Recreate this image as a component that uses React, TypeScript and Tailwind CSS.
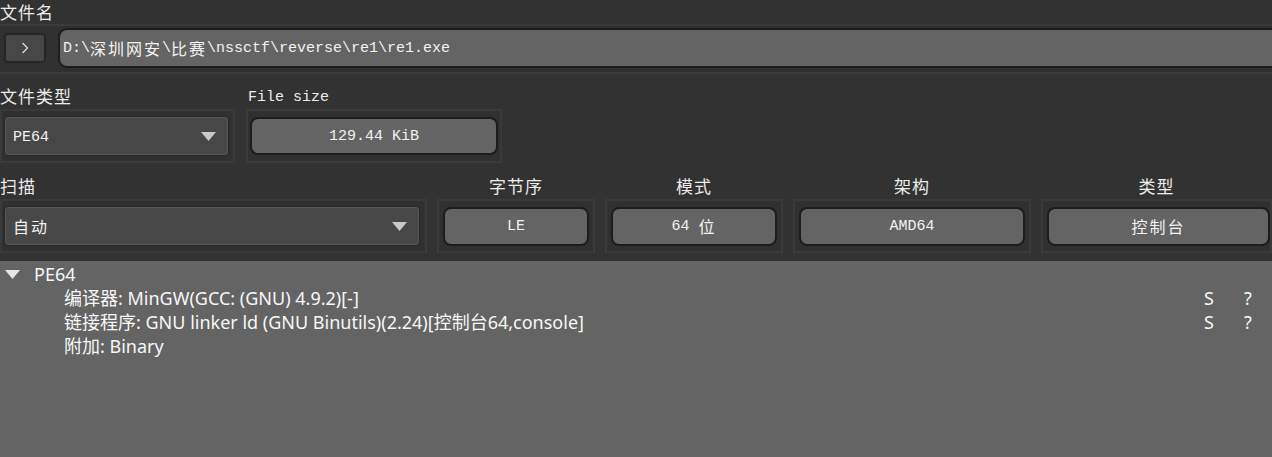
import React from "react";

const CJK = /([\u3000-\u9fff\uff00-\uffef]+)/;

function Mixed({
  text,
  mono = "text-[15px]",
  cjk = "text-[16px] tracking-[2px]",
}: {
  text: string;
  mono?: string;
  cjk?: string;
}) {
  const parts = text.split(CJK);
  return (
    <>
      {parts.map((p, i) =>
        p ? (
          CJK.test(p) ? (
            <span key={i} className={`font-['Noto_Sans_CJK_SC',sans-serif] ${cjk}`}>
              {p}
            </span>
          ) : (
            <span key={i} className={`font-['Liberation_Mono',monospace] whitespace-pre ${mono}`}>
              {p}
            </span>
          )
        ) : null
      )}
    </>
  );
}

function Arrow() {
  return (
    <svg width="15" height="9" viewBox="0 0 15 9" className="shrink-0">
      <polygon points="0,0 15,0 7.5,9" fill="#c9c9c9" />
    </svg>
  );
}

function Combo({ text }: { text: string }) {
  return (
    <div className="flex-1 h-[40px] rounded-[4px] border border-[#262626] bg-[#474747] shadow-[inset_0_0_0_1px_#585858] flex items-center pl-[8px] pr-[12px] text-[#f2f2f2]">
      <div className="flex-1 leading-none">
        <Mixed text={text} />
      </div>
      <Arrow />
    </div>
  );
}

function Field({ text, h = "h-[39px]" }: { text: string; h?: string }) {
  return (
    <div className={`flex-1 ${h} rounded-[8px] border-2 border-[#1c1c1c] bg-[#646464] flex items-center justify-center text-[#f2f2f2] leading-none`}>
      <Mixed text={text} />
    </div>
  );
}

function Group({ children, className = "" }: { children: React.ReactNode; className?: string }) {
  return (
    <div className={`h-[54px] border-2 border-[#3a3a3a] bg-[#303030] flex items-center ${className}`}>
      {children}
    </div>
  );
}

function Label({ text, center = false, h = "h-[35px]", pt = "pt-[10px]" }: { text: string; center?: boolean; h?: string; pt?: string }) {
  return (
    <div className={`${h} ${pt} leading-[24px] text-[#ececec] ${center ? "text-center" : ""}`}>
      <Mixed text={text} cjk="text-[17px] tracking-[1px]" />
    </div>
  );
}

export default function App() {
  return (
    <div className="w-[1272px] h-[457px] bg-[#323232] overflow-hidden flex flex-col">
      {/* 文件名 */}
      <div className="h-[24px] pt-[2px] leading-[20px] text-[#ececec]">
        <Mixed text="文件名" cjk="text-[17px] tracking-[1px]" />
      </div>
      <div className="h-[50px] w-[1300px] border-y-2 border-[#3a3a3a] bg-[#303030] flex items-start pt-[2px] pl-[4px] gap-[12px]">
        <div className="mt-[5px] w-[42px] h-[30px] rounded-[4px] border-2 border-[#262626] bg-[#474747] flex items-center justify-center">
          <svg width="8" height="12" viewBox="0 0 8 12">
            <polyline points="1.5,1 6.5,6 1.5,11" fill="none" stroke="#cfe3ff" strokeWidth="1.2" />
          </svg>
        </div>
        <div className="flex-1 h-[40px] rounded-l-[9px] border-2 border-[#1c1c1c] bg-[#646464] flex items-center pl-[3px] text-[#f2f2f2] leading-none">
          <Mixed text="D:\深圳网安\比赛\nssctf\reverse\re1\re1.exe" />
        </div>
      </div>

      {/* row 2 */}
      <div className="flex gap-[11px]">
        <div className="w-[235px] flex flex-col">
          <Label text="文件类型" />
          <Group className="pl-[2px] pr-[4px]">
            <Combo text="PE64" />
          </Group>
        </div>
        <div className="w-[256px] flex flex-col">
          <div className="pl-[2px]">
            <Label text="File size" pt="pt-[9px]" />
          </div>
          <Group className="pl-[2px] pr-[2px]">
            <Field text="129.44 KiB" h="h-[38px]" />
          </Group>
        </div>
      </div>

      {/* row 3 */}
      <div className="flex gap-[10px]">
        <div className="w-[427px] flex flex-col">
          <Label text="扫描" h="h-[36px]" pt="pt-[11px]" />
          <Group className="pl-[2px] pr-[5px]">
            <Combo text="自动" />
          </Group>
        </div>
        <div className="w-[158px] flex flex-col">
          <Label text="字节序" center h="h-[36px]" pt="pt-[11px]" />
          <Group className="px-[4px]">
            <Field text="LE" />
          </Group>
        </div>
        <div className="w-[178px] flex flex-col">
          <Label text="模式" center h="h-[36px]" pt="pt-[11px]" />
          <Group className="px-[4px]">
            <Field text="64 位" />
          </Group>
        </div>
        <div className="w-[238px] flex flex-col">
          <Label text="架构" center h="h-[36px]" pt="pt-[11px]" />
          <Group className="px-[4px]">
            <Field text="AMD64" />
          </Group>
        </div>
        <div className="w-[231px] flex flex-col">
          <Label text="类型" center h="h-[36px]" pt="pt-[11px]" />
          <Group className="pl-[4px] pr-0">
            <Field text="控制台" />
          </Group>
        </div>
      </div>

      {/* tree */}
      <div className="mt-[8px] flex-1 bg-[#646464] pt-[1px] text-[#f7f7f7] font-['Noto_Sans','Noto_Sans_CJK_SC',sans-serif] text-[18px] leading-[24px]">
        <div className="flex items-center h-[24px]">
          <svg width="15" height="9" viewBox="0 0 15 9" className="ml-[5px] mr-[14px]">
            <polygon points="0,0 15,0 7.5,9" fill="#e6e6e6" />
          </svg>
          <span>PE64</span>
        </div>
        <div className="flex h-[24px]">
          <div className="flex-1 pl-[64px]">编译器: MinGW(GCC: (GNU) 4.9.2)[-]</div>
          <div className="w-[68px] flex">
            <span className="w-[40px]">S</span>
            <span>?</span>
          </div>
        </div>
        <div className="flex h-[24px]">
          <div className="flex-1 pl-[64px]">链接程序: GNU linker ld (GNU Binutils)(2.24)[控制台64,console]</div>
          <div className="w-[68px] flex">
            <span className="w-[40px]">S</span>
            <span>?</span>
          </div>
        </div>
        <div className="flex h-[24px]">
          <div className="flex-1 pl-[64px]">附加: Binary</div>
        </div>
      </div>
    </div>
  );
}
